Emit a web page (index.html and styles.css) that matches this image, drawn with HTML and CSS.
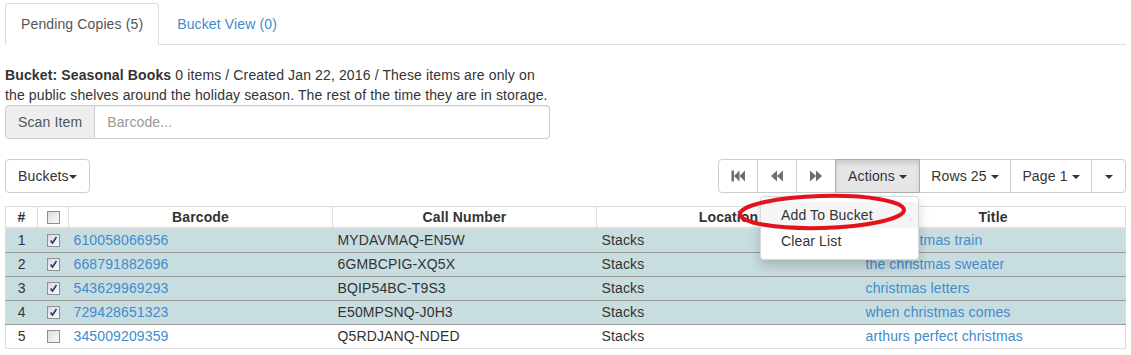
FILE: index.html
```html
<!DOCTYPE html>
<html lang="en">
<head>
<meta charset="UTF-8">
<title>Pending Copies</title>
<link rel="stylesheet" href="styles.css">
</head>
<body>
<div class="page">

  <ul class="nav-tabs">
    <li class="active"><a href="#">Pending Copies (5)</a></li>
    <li><a href="#">Bucket View (0)</a></li>
  </ul>

  <div class="bucket-info">
    <p><b>Bucket: Seasonal Books</b> 0 items / Created Jan 22, 2016 / These items are only on<br>the public shelves around the holiday season. The rest of the time they are in storage.</p>
    <div class="input-group">
      <span class="addon">Scan Item</span>
      <input type="text" placeholder="Barcode...">
    </div>
  </div>

  <div class="toolbar">
    <button type="button" class="btn single">Buckets<span class="caret"></span></button>

    <div class="btn-group">
      <button type="button" class="btn icon first">
        <svg width="14" height="12" viewBox="0 0 14 12"><rect x="0.5" y="0.5" width="2.5" height="11"/><polygon points="3,6 8.5,0.5 8.5,11.5"/><polygon points="8.5,6 14,0.5 14,11.5"/></svg>
      </button>
      <button type="button" class="btn icon">
        <svg width="14" height="12" viewBox="0 0 14 12"><polygon points="1,6 7,0.5 7,11.5"/><polygon points="7,6 13,0.5 13,11.5"/></svg>
      </button>
      <button type="button" class="btn icon">
        <svg width="14" height="12" viewBox="0 0 14 12"><polygon points="13,6 7,0.5 7,11.5"/><polygon points="7,6 1,0.5 1,11.5"/></svg>
      </button>
      <div class="dropdown">
        <button type="button" class="btn pressed w-actions">Actions <span class="caret"></span></button>
        <ul class="dropdown-menu">
          <li class="hover"><a href="#">Add To Bucket</a></li>
          <li><a href="#">Clear List</a></li>
        </ul>
      </div>
      <button type="button" class="btn w-rows">Rows 25 <span class="caret"></span></button>
      <button type="button" class="btn w-page">Page 1 <span class="caret"></span></button>
      <button type="button" class="btn last"><span class="caret"></span></button>
    </div>
  </div>

  <table class="grid">
    <colgroup>
      <col style="width:32px">
      <col style="width:31px">
      <col style="width:264px">
      <col style="width:264px">
      <col style="width:264px">
      <col>
    </colgroup>
    <thead>
      <tr>
        <th>#</th>
        <th><span class="chk"></span></th>
        <th>Barcode</th>
        <th>Call Number</th>
        <th>Location</th>
        <th>Title</th>
      </tr>
    </thead>
    <tbody>
      <tr class="selected">
        <td class="num">1</td>
        <td class="num"><span class="chk on"><svg width="11" height="11" viewBox="0 0 11 11"><path d="M2.5 5.5 L4.5 8 L8.5 2" /></svg></span></td>
        <td><a href="#">610058066956</a></td>
        <td>MYDAVMAQ-EN5W</td>
        <td>Stacks</td>
        <td><a href="#">the christmas train</a></td>
      </tr>
      <tr class="selected">
        <td class="num">2</td>
        <td class="num"><span class="chk on"><svg width="11" height="11" viewBox="0 0 11 11"><path d="M2.5 5.5 L4.5 8 L8.5 2" /></svg></span></td>
        <td><a href="#">668791882696</a></td>
        <td>6GMBCPIG-XQ5X</td>
        <td>Stacks</td>
        <td><a href="#">the christmas sweater</a></td>
      </tr>
      <tr class="selected">
        <td class="num">3</td>
        <td class="num"><span class="chk on"><svg width="11" height="11" viewBox="0 0 11 11"><path d="M2.5 5.5 L4.5 8 L8.5 2" /></svg></span></td>
        <td><a href="#">543629969293</a></td>
        <td>BQIP54BC-T9S3</td>
        <td>Stacks</td>
        <td><a href="#">christmas letters</a></td>
      </tr>
      <tr class="selected">
        <td class="num">4</td>
        <td class="num"><span class="chk on"><svg width="11" height="11" viewBox="0 0 11 11"><path d="M2.5 5.5 L4.5 8 L8.5 2" /></svg></span></td>
        <td><a href="#">729428651323</a></td>
        <td>E50MPSNQ-J0H3</td>
        <td>Stacks</td>
        <td><a href="#">when christmas comes</a></td>
      </tr>
      <tr>
        <td class="num">5</td>
        <td class="num"><span class="chk"></span></td>
        <td><a href="#">345009209359</a></td>
        <td>Q5RDJANQ-NDED</td>
        <td>Stacks</td>
        <td><a href="#">arthurs perfect christmas</a></td>
      </tr>
    </tbody>
  </table>

  <!-- red marker drawn around the menu item -->
  <svg class="marker" width="176" height="44" viewBox="0 0 176 44">
    <ellipse cx="86" cy="20" rx="82" ry="16" transform="rotate(-1.5 86 20)"/>
  </svg>

</div>
</body>
</html>
```

FILE: styles.css
```css
* {
  box-sizing: border-box;
}

body {
  margin: 0;
  font-family: "Liberation Sans", Arial, sans-serif;
  font-size: 14px;
  line-height: 20px;
  letter-spacing: 0.13px;
  color: #333;
  background-color: #fff;
}

a {
  color: #428bca;
  text-decoration: none;
}

.page {
  position: relative;
  padding: 3px 5px 0 5px;
}

/* tabs */
.nav-tabs {
  display: flex;
  list-style: none;
  margin: 0;
  padding: 0;
  border-bottom: 1px solid #ddd;
}

.nav-tabs li {
  margin-bottom: -1px;
}

.nav-tabs a {
  display: block;
  padding: 10px 15px;
  margin-right: 2px;
  border: 1px solid transparent;
  border-radius: 4px 4px 0 0;
}

.nav-tabs li.active a {
  color: #555;
  background-color: #fff;
  border-color: #ddd #ddd transparent #ddd;
}

/* bucket info + scan box */
.bucket-info {
  width: 545px;
  margin-top: 20px;
}

.bucket-info p {
  margin: 0;
  white-space: nowrap;
}

.input-group {
  display: flex;
  height: 34px;
}

.input-group .addon {
  padding: 6px 12px;
  background-color: #eee;
  border: 1px solid #ccc;
  border-radius: 4px 0 0 4px;
  color: #555;
}

.input-group input {
  flex: 1;
  padding: 6px 12px;
  border: 1px solid #ccc;
  border-left: none;
  border-radius: 0 4px 4px 0;
  font-family: inherit;
  font-size: 14px;
  letter-spacing: 0.13px;
  color: #555;
  outline: none;
  box-shadow: inset 0 1px 1px rgba(0, 0, 0, .075);
}

.input-group input::placeholder {
  color: #999;
}

/* toolbar */
.toolbar {
  display: flex;
  justify-content: space-between;
  margin-top: 20px;
  margin-bottom: 13px;
}

.btn {
  height: 34px;
  padding: 6px 12px;
  font-family: inherit;
  font-size: 14px;
  line-height: 20px;
  letter-spacing: 0.13px;
  color: #333;
  background-color: #fff;
  border: 1px solid #ccc;
  border-radius: 0;
  white-space: nowrap;
}

.btn.single {
  border-radius: 4px;
}

.btn-group {
  display: flex;
}

.btn-group > .btn,
.btn-group > .dropdown {
  margin-left: -1px;
}

.btn-group .first {
  margin-left: 0;
  border-radius: 4px 0 0 4px;
}

.btn-group .last {
  width: 35px;
  padding: 0;
  border-radius: 0 4px 4px 0;
}

.btn.icon {
  width: 40px;
  padding: 0;
  display: flex;
  align-items: center;
  justify-content: center;
}

.btn.icon svg {
  fill: #6e6e6e;
}

.w-actions {
  width: 85px;
  padding: 0;
}

.w-rows {
  width: 92px;
  padding: 0;
}

.w-page {
  width: 82px;
  padding: 0;
}

.btn.pressed {
  background-color: #e6e6e6;
  border-color: #adadad;
  box-shadow: inset 0 3px 5px rgba(0, 0, 0, .125);
}

.caret {
  display: inline-block;
  width: 0;
  height: 0;
  vertical-align: middle;
  border-top: 4px solid #333;
  border-left: 4px solid transparent;
  border-right: 4px solid transparent;
}

.dropdown {
  position: relative;
  display: flex;
}

.dropdown-menu {
  position: absolute;
  top: 100%;
  right: 1px;
  z-index: 10;
  width: 159px;
  margin: 3px 0 0 0;
  padding: 5px 0;
  list-style: none;
  background-color: #fff;
  border: 1px solid rgba(0, 0, 0, .15);
  border-radius: 4px;
  box-shadow: 0 6px 12px rgba(0, 0, 0, .175);
}

.dropdown-menu a {
  display: block;
  padding: 3px 20px;
  line-height: 20px;
  color: #333;
  white-space: nowrap;
}

.dropdown-menu .hover a {
  background-color: #f5f5f5;
}

/* table */
.grid {
  width: 100%;
  border-collapse: collapse;
  table-layout: fixed;
  border: 1px solid #ddd;
}

.grid th {
  padding: 0 5px;
  line-height: 20px;
  text-align: center;
  font-weight: bold;
  border: 1px solid #ddd;
  border-bottom: 2px solid #ddd;
}

.grid td {
  padding: 1px 5px 2px 5px;
  line-height: 20px;
  border-top: 1px solid #ddd;
  white-space: nowrap;
  overflow: hidden;
}

.grid td.num {
  text-align: center;
}

.grid tr.selected td {
  background-color: #c8dde0;
  border-bottom: 1px solid #999;
}

.chk {
  display: inline-block;
  width: 13px;
  height: 13px;
  vertical-align: -2px;
  border: 1px solid #8e8f8f;
  background: linear-gradient(135deg, #dcdcdc, #fbfbfb);
  position: relative;
}

.chk svg {
  position: absolute;
  left: 0;
  top: 0;
  fill: none;
  stroke: #2c3a8f;
  stroke-width: 1.7;
}

/* annotation */
.marker {
  position: absolute;
  left: 736px;
  top: 192px;
  z-index: 20;
}

.marker ellipse {
  fill: none;
  stroke: #e3121b;
  stroke-width: 4;
}
```
